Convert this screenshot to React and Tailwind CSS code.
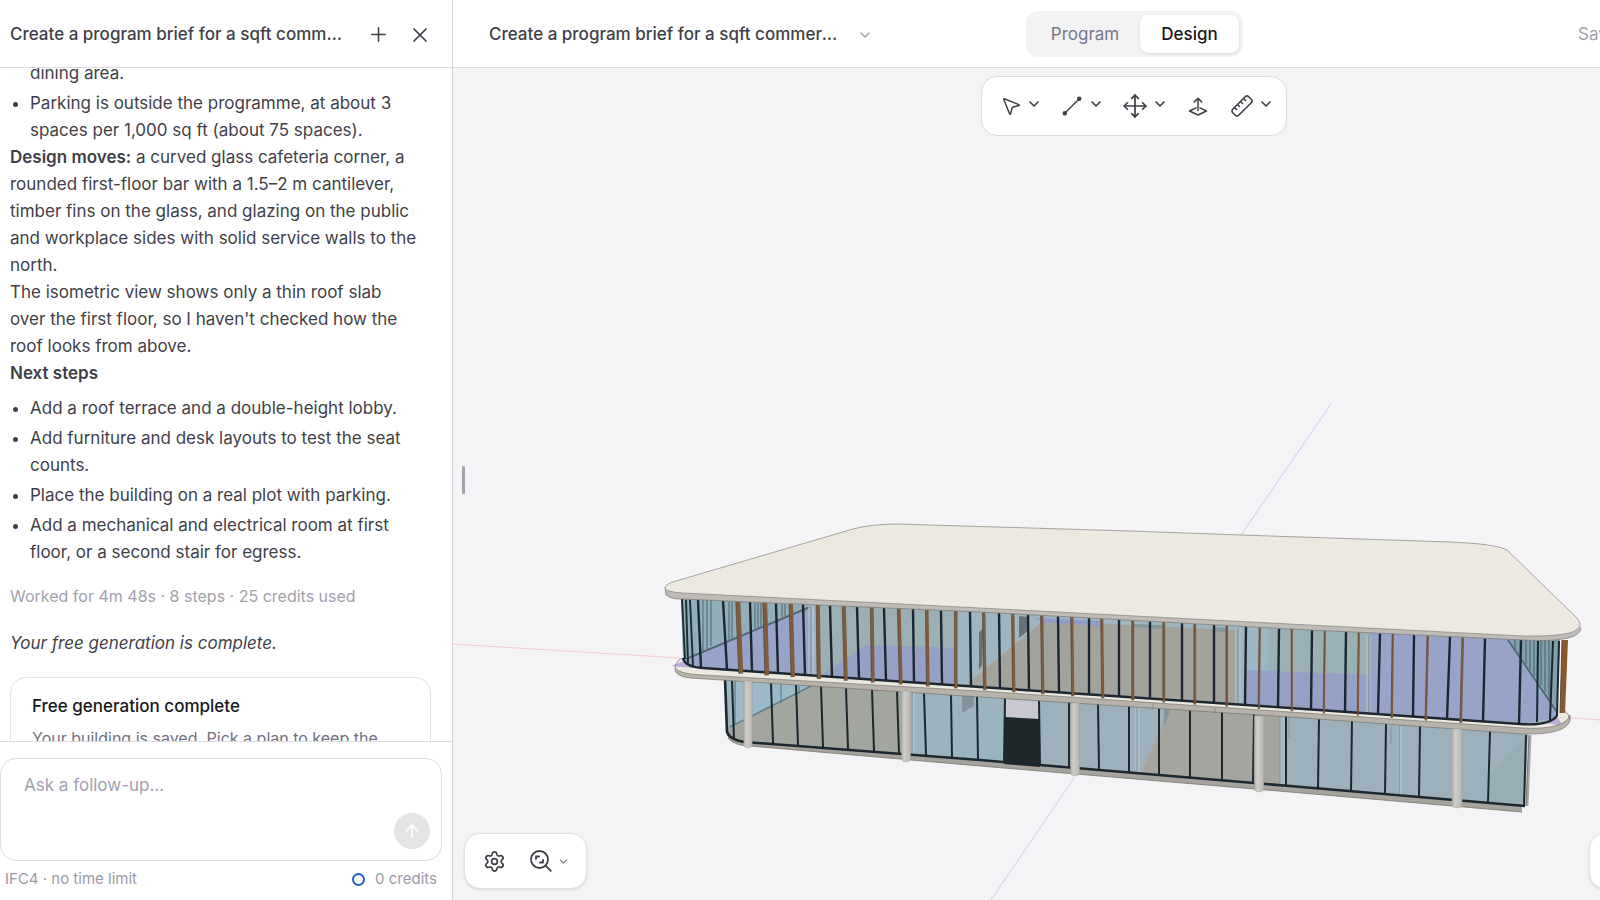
import React from 'react';
import { Plus, X, ChevronDown, ArrowUp, Move, Settings, MousePointer2, Ruler } from 'lucide-react';

/* ---------- building model ---------- */

const edgeY = (points, x) => {
  for (let i = 1; i < points.length; i++) {
    const [x0, y0] = points[i - 1];
    const [x1, y1] = points[i];
    if (x <= x1 || i === points.length - 1) return y0 + ((x - x0) * (y1 - y0)) / (x1 - x0);
  }
  return 0;
};

const ROOF_SOFFIT = [[680, 599], [980, 612], [1290, 629], [1523, 640], [1565, 640]];
const UPPER_SILL = [[703, 668], [980, 687], [1290, 708], [1520, 724]];
const SLAB_SOFFIT = [[690, 678], [980, 696], [1290, 716], [1523, 734]];
const GROUND_SILL = [[737, 740], [980, 760], [1290, 786], [1525, 806]];

const UPPER_MULLIONS = [
  [698, 701], [723, 727], [750, 752], [776, 778], [803, 805], [830, 832], [857, 859], [884, 886],
  [913, 914], [941, 942], [970, 971], [999, 1000], [1028, 1029], [1058, 1059], [1089, 1089],
  [1119, 1119], [1150, 1150], [1182, 1182], [1214, 1214], [1246, 1245], [1279, 1278], [1312, 1311],
  [1346, 1345], [1380, 1378], [1414, 1413], [1450, 1447], [1485, 1483], [1521, 1519],
];

const TIMBER_FINS = [
  [738, 741, 4.6], [765, 767, 4.4], [791, 793, 4], [818, 819, 3.8], [844, 846, 3.6], [872, 873, 3.4],
  [899, 901, 3.3], [927, 928, 3.2], [956, 956, 3], [984, 985, 3], [1013, 1014, 2.9], [1042, 1043, 2.8],
  [1072, 1073, 2.7], [1102, 1103, 2.6], [1133, 1133, 2.5], [1164, 1164, 2.4], [1195, 1195, 2.3],
  [1227, 1227, 2.1], [1260, 1259, 1.9], [1292, 1292, 1.7], [1325, 1324, 1.7], [1359, 1358, 1.7],
  [1393, 1392, 1.9], [1428, 1426, 2], [1463, 1461, 2.2],
];

const GROUND_MULLIONS = [
  [732, 734], [771, 773], [796, 798], [821, 823], [846, 848], [872, 874], [897, 899], [924, 926],
  [951, 952], [977, 978], [1005, 1004], [1039, 1040], [1069, 1069], [1098, 1099], [1129, 1129],
  [1159, 1159], [1190, 1190], [1222, 1222], [1254, 1253], [1286, 1286], [1319, 1318], [1352, 1351],
  [1386, 1385], [1420, 1419], [1490, 1488],
];

const COLUMNS = [
  [748, 8.5, 681, 748], [906, 9, 691, 762], [1075, 9, 703, 776], [1259, 9.5, 716, 792], [1457, 10, 729, 808],
];

function Fin({ from, to, top, bottom, color, width, drop = 0 }) {
  return <line x1={from} y1={edgeY(top, from)} x2={to} y2={edgeY(bottom, to) + drop} stroke={color} strokeWidth={width} />;
}

function BuildingModel() {
  return (
    <svg
      className="absolute inset-0 size-full"
      viewBox="453 68 1147 832"
      preserveAspectRatio="xMidYMid slice"
      role="img"
      aria-label="3D building model"
    >
      <defs>
        <linearGradient id="column" x1="0" x2="1" y1="0" y2="0">
          <stop offset="0" stopColor="#b4b2ae" />
          <stop offset="0.35" stopColor="#cfcdc8" />
          <stop offset="1" stopColor="#b8b6b2" />
        </linearGradient>
        <clipPath id="upper-glass">
          <path d="M681 598 L980 611 L1290 628 L1523 639 L1560 639 L1557 716 Q1545 727 1520 724 L1290 708 L980 687 L703 668 Q684 667 683 660 Z" />
        </clipPath>
        <clipPath id="ground-glass">
          <path d="M725 679 L980 695 L1290 715 L1528 734 L1525 806 L1290 786 L980 760 L745 742 Q728 741 727 732 Z" />
        </clipPath>
      </defs>

      {/* world axes */}
      <path d="M453 644 L680 658 M1565 717 L1600 720" stroke="#f6c9cd" strokeWidth="1" fill="none" />
      <path d="M1331 404 L1241 535 M1074 778 L991 900" stroke="#c3d0f5" strokeWidth="1" fill="none" />

      {/* plinth */}
      <path d="M727 733 L728 738 Q735 746 750 746 L980 766 L1290 792 L1522 812 L1522 805 L1290 784 L980 758 L740 738 Z" fill="#a6a39e" />
      <path d="M728 738 Q735 746 750 746 L980 766 L1290 792 L1522 812" fill="none" stroke="#77756f" strokeWidth="0.8" />

      {/* ground floor interior */}
      <g clipPath="url(#ground-glass)">
        <rect x="720" y="670" width="820" height="150" fill="#9cb1bc" />
        <path d="M725 679 L815 684 L730 727 Z" fill="#9bb9c6" />
        <path d="M727 729 L815 684 L911 690 L911 760 L727 750 Z" fill="#a3a59f" />
        <path d="M730 727 L815 684" stroke="#5f7d8a" strokeWidth="1.6" />
        <path d="M781 684 V703 M799 686 V694 M735 681 V724" stroke="#527280" strokeWidth="1" />
        <path d="M911 689 H1005 V770 H911 Z" fill="#9cb4c0" />
        <path d="M1140 775 L1171 705 L1280 713 V790 Z" fill="#a4a59f" />
        <path d="M1140 775 L1164 727" stroke="#b4aaa0" strokeWidth="1" />
        <path d="M962 695 L974 696 L974 706 L962 713 Z M1164 709 L1170 710 L1164 727 Z" fill="#84939d" />
        <path d="M911 690 V760 M914 690 V760 M1136 707 V774 M1139 707 V774 M1281 716 V788 M1284 716 V788 M1398 726 V798 M1401 726 V798" stroke="#b4c4cd" strokeWidth="1.2" />
        <path d="M912 690 V760 M1137 707 V774 M1280 716 V788 M1399 726 V798" stroke="#6f808a" strokeWidth="0.6" />
        <path d="M1289 717 V738 M1391 726 V744" stroke="#8296a3" strokeWidth="1" />
        <path d="M1490 775 L1525 735 V806 H1490 Z" fill="#93a8b0" fillOpacity="0.35" />
      </g>

      {/* entrance */}
      <path d="M1006 699 L1038 701 L1038 719 L1006 717 Z" fill="#c9c7cf" />
      <path d="M1004 717 L1039 719 L1040 767 L1004 764 Z" fill="#20272a" />

      {GROUND_MULLIONS.map(([from, to]) => (
        <Fin key={from} from={from} to={to} top={SLAB_SOFFIT} bottom={GROUND_SILL} color="#1d272e" width={2} />
      ))}
      <path d="M725 679 L727 732 Q730 740 745 742 L980 760 L1290 786 L1525 806" fill="none" stroke="#1d272e" strokeWidth="2.6" />
      <path d="M1530 735 L1527 806" stroke="#aaa8a4" strokeWidth="3" />
      <path d="M1526 735 L1524 806" stroke="#1d272e" strokeWidth="2" />
      <path d="M1529 735 L1526 806" stroke="#686f70" strokeWidth="0.8" />

      {/* first floor slab */}
      <path d="M682 658 Q673 665 675 670 Q681 675 703 675 L980 691 L1290 713 L1523 729 Q1567 729 1569 717 L1564 710 L1520 722 L980 686 L700 667 Z" fill="#ebe8df" />
      <path d="M671 666 L684 661 L694 668 Z" fill="#b9aedd" />
      <path d="M1545 723 L1558 718 L1563 726 Z" fill="#b9aedd" />
      <path d="M675 668 Q679 674 703 675 L980 691 L1290 712 L1523 728 Q1565 730 1570 715 L1570 721 Q1565 735 1523 734 L1290 717 L980 697 L690 678 Q674 676 675 668 Z" fill="#b8b3aa" />
      <path d="M675 668 Q679 674 703 675 L980 691 L1290 712 L1523 728 Q1565 730 1570 715 L1570 721 Q1565 735 1523 734 L1290 717 L980 697 L690 678 Q674 676 675 668 M1153 703 V709 M1215 708 V713" fill="none" stroke="#6b6963" strokeWidth="0.6" />
      <path d="M682 658 Q676 661 675 668 M1565 711 Q1569 714 1570 720" fill="none" stroke="#706e68" strokeWidth="0.7" />

      {/* first floor interior */}
      <g clipPath="url(#upper-glass)">
        <rect x="675" y="590" width="890" height="145" fill="#9eb6c2" />
        <path d="M681 598 L810 606 L683 662 Z" fill="#92afb9" />
        <path d="M683 662 L810 606 L812 680 L700 670 Z" fill="#97a3c8" />
        <path d="M686 659 L810 607" stroke="#4f6875" strokeWidth="2" />
        <path d="M703 600 V651 M707 600 V649 M711 600 V646 M729 602 V641 M732 602 V640 M755 603 V629 M758 603 V628 M761 603 V627 M782 604 V617 M785 604 V616" stroke="#54717f" strokeWidth="1.2" />
        <path d="M816 605 H956 V690 H816 Z" fill="#9bb0b4" />
        <path d="M820 676 L866 645 L958 648 L958 690 L820 680 Z" fill="#95a0c5" />
        <path d="M960 690 L1043 621 L1238 630 L1238 708 Z" fill="#a3a39d" />
        <path d="M960 690 L1043 621" stroke="#b2a99c" strokeWidth="1" />
        <path d="M1033 618 L1102 621 L1102 626 L1042 622 Z" fill="#919bc8" />
        <path d="M1133 624 L1162 625 L1162 629 L1133 627 Z M1214 627 L1228 628 L1228 633 L1214 631 Z" fill="#83989b" />
        <path d="M1240 625 H1369 V715 H1240 Z" fill="#9bb0b5" />
        <path d="M1240 625 L1268 627 V703 H1240 Z" fill="#9db6c4" />
        <path d="M1246 670 L1369 675 L1369 715 L1246 708 Z" fill="#95a0c5" />
        <path d="M1369 632 L1511 638 L1560 716 L1520 725 L1369 715 Z" fill="#97a4c8" />
        <path d="M1508 638 L1562 638 L1559 712 Z" fill="#82a0a9" />
        <path d="M1508 640 L1557 712" stroke="#4a626b" strokeWidth="1.6" />
        <path d="M1515 640 V650 M1526 640 V664 M1530 640 V670 M1534 640 V676 M1541 640 V685 M1545 640 V692 M1549 640 V699" stroke="#48616b" strokeWidth="1" />
        <path d="M979 632 L983 629 L982 665 L979 670 Z M1019 616 L1028 617 V631 L1019 638 Z" fill="#65727b" />
        <path d="M809 606 V676 M813 606 V676 M1236 628 V703 M1240 628 V703 M1367 635 V712 M1370 635 V712" stroke="#b4c4cd" strokeWidth="1.2" />
        <path d="M811 606 V676 M1238 628 V703 M1369 635 V712" stroke="#6f808a" strokeWidth="0.6" />
      </g>
      <path d="M682 599 L685 659 M686 600 L688 663 M690 600 L693 666" stroke="#1d2b34" strokeWidth="1.9" />
      <path d="M1538 641 L1537 722 M1553 641 L1550 720 M1559 641 L1557 716" stroke="#192731" strokeWidth="2" />
      <path d="M683 658 Q685 667 703 668 L980 687 L1290 708 L1520 724 Q1549 726 1557 716" fill="none" stroke="#1d2730" strokeWidth="2.4" />
      {UPPER_MULLIONS.map(([from, to]) => (
        <Fin key={from} from={from} to={to} top={ROOF_SOFFIT} bottom={UPPER_SILL} color="#1b2630" width={2.4} />
      ))}
      {TIMBER_FINS.map(([from, to, width]) => (
        <React.Fragment key={from}>
          <Fin from={from} to={to} top={ROOF_SOFFIT} bottom={UPPER_SILL} color="#7f5c3c" width={width} drop={3} />
          <Fin from={from - width / 2} to={to - width / 2} top={ROOF_SOFFIT} bottom={UPPER_SILL} color="#4d3c2f" width={0.6} drop={3} />
        </React.Fragment>
      ))}
      <path d="M1562 640 L1568 640 L1565 713 L1560 713 Z" fill="#88592a" />
      <path d="M1562 640 L1560 713" stroke="#4b382a" strokeWidth="0.8" />

      {/* columns */}
      {COLUMNS.map(([x, width, top, bottom]) => (
        <path
          key={x}
          d={`M${x - width / 2} ${top} H${x + width / 2} V${bottom - 2} Q${x} ${bottom + 2} ${x - width / 2} ${bottom - 2} Z`}
          fill="url(#column)"
          stroke="#9a9893"
          strokeWidth="0.4"
        />
      ))}

      {/* roof */}
      <path d="M665 587 L666 595 Q671 599 681 599 L980 612 L1290 629 L1523 640 Q1580 643 1581 628 L1575 618 L665 587 Z" fill="#bfbcb7" />
      <path d="M665 587 L666 595 Q671 599 681 599 L980 612 L1290 629 L1523 640 Q1580 643 1581 628" fill="none" stroke="#7b7973" strokeWidth="0.7" />
      <path
        d="M665 588 Q665 584 676 581 L853 529 Q872 524 897 524 L1130 531 L1270 536 L1450 542 Q1497 544 1507 550 L1577 618 Q1591 635 1540 636 L1523 636 L1270 623 L980 608 L683 593 Q666 592 665 588 Z"
        fill="#ebe9e0"
        stroke="#85847d"
        strokeWidth="0.7"
      />
    </svg>
  );
}

/* ---------- icons ---------- */

function LineIcon() {
  return (
    <svg className="size-6" viewBox="0 0 24 24" fill="none" stroke="currentColor" strokeWidth="1.5" aria-hidden="true">
      <path d="M5 19 19 5" />
      <circle cx="4.800" cy="19.200" r="1.500" fill="currentColor" />
      <circle cx="19.200" cy="4.800" r="1.500" fill="currentColor" />
    </svg>
  );
}

function PushPullIcon() {
  return (
    <svg className="size-6" viewBox="0 0 24 24" fill="none" stroke="currentColor" strokeWidth="1.5" strokeLinecap="round" strokeLinejoin="round" aria-hidden="true">
      <path d="M12 16.500V4.200M8.300 7.900 12 4.200l3.700 3.700" />
      <path d="M10 13.900 3.500 17l8.500 4 8.500-4-6.500-3.100" />
    </svg>
  );
}

function ZoomFitIcon() {
  return (
    <svg className="size-6" viewBox="0 0 24 24" fill="none" stroke="currentColor" strokeWidth="1.8" strokeLinecap="round" strokeLinejoin="round" aria-hidden="true">
      <circle cx="10.500" cy="10.500" r="8.500" />
      <path d="m16.800 16.800 5 5M7 10V7.500h3M14 11v2.500h-3" />
    </svg>
  );
}

/* ---------- chat panel ---------- */

function ChatPanel() {
  return (
    <aside className="flex w-[453px] shrink-0 flex-col border-r border-[#d4d4d8] bg-white">
      <header className="flex h-[68px] shrink-0 items-center border-b border-[#dcdce0] pl-2.5 pr-4 pt-0.5">
        <h2 className="min-w-0 flex-1 truncate text-[17px] font-medium">Create a program brief for a sqft commercial office</h2>
        <button type="button" aria-label="New chat" className="ml-5 flex size-8 items-center justify-center">
          <Plus size={23} strokeWidth={1.6} />
        </button>
        <button type="button" aria-label="Close" className="ml-2.5 flex size-8 items-center justify-center">
          <X size={24} strokeWidth={1.7} />
        </button>
      </header>

      <div className="min-h-0 flex-1 overflow-hidden pl-2.5 pr-[21px]">
        <div className="-mt-2 pr-3 text-[17px] leading-[27px]">
          <ul className="list-disc space-y-[3px] pl-5">
            <li className="list-none">dining area.</li>
            <li>Parking is outside the programme, at about 3 spaces per 1,000 sq ft (about 75 spaces).</li>
          </ul>
          <p>
            <strong className="font-semibold">Design moves:</strong> a curved glass cafeteria corner, a rounded first-floor bar with a 1.5–2 m
            cantilever, timber fins on the glass, and glazing on the public and workplace sides with solid service walls to the north.
          </p>
          <p>The isometric view shows only a thin roof slab over the first floor, so I haven't checked how the roof looks from above.</p>
          <h3 className="font-semibold">Next steps</h3>
          <ul className="mt-2 list-disc space-y-[3px] pl-5">
            <li>Add a roof terrace and a double-height lobby.</li>
            <li>Add furniture and desk layouts to test the seat counts.</li>
            <li>Place the building on a real plot with parking.</li>
            <li>Add a mechanical and electrical room at first floor, or a second stair for egress.</li>
          </ul>
        </div>
        <p className="mt-[18px] text-[16px] leading-6 text-[#a1a1ad]">Worked for 4m 48s · 8 steps · 25 credits used</p>
        <p className="mt-[22px] text-[17px] italic leading-[27px]">Your free generation is complete.</p>
        <section className="mt-5 rounded-2xl border border-[#e2e2e6] px-[21px] py-4">
          <h3 className="text-[17px] font-medium leading-6 text-[#18181b]">Free generation complete</h3>
          <p className="mt-2 text-[16px] leading-6 text-[#71717f]">Your building is saved. Pick a plan to keep the conversation going.</p>
        </section>
      </div>

      <form className="shrink-0 border-t border-[#dcdce0] pr-2.5 pt-4" onSubmit={(event) => event.preventDefault()}>
        <div className="flex h-[103px] rounded-2xl border border-[#dfdfe3] py-[11px] pl-[23px] pr-[11px]">
          <textarea
            aria-label="Ask a follow-up"
            placeholder="Ask a follow-up..."
            className="min-w-0 flex-1 resize-none bg-transparent pt-[3px] text-[17px] leading-6 outline-none placeholder:text-[#a1a1ad]"
          />
          <button type="submit" aria-label="Send" className="flex size-9 items-center justify-center self-end rounded-full bg-[#e4e4e7] text-white">
            <ArrowUp size={20} strokeWidth={2} />
          </button>
        </div>
        <div className="mb-0.5 flex h-[37px] items-center justify-between px-[5px] text-[15px] text-[#9a9aa6]">
          <span>IFC4 · no time limit</span>
          <span className="flex items-center gap-2.5">
            <span className="size-[13px] rounded-full border-2 border-[#1d5fd0]" />0 credits
          </span>
        </div>
      </form>
    </aside>
  );
}

/* ---------- design workspace ---------- */

function ToolButton({ label, children, menu = true }) {
  return (
    <button type="button" aria-label={label} className="flex items-center gap-1">
      {children}
      {menu && <ChevronDown className="-mt-1" size={16} strokeWidth={2.5} />}
    </button>
  );
}

export default function App() {
  return (
    <div className="flex h-screen overflow-hidden bg-white font-['Inter',sans-serif] text-[#3f3f4a]">
      <ChatPanel />
      <main className="flex min-w-0 flex-1 flex-col">
        <header className="flex h-[68px] shrink-0 items-center overflow-hidden border-b border-[#dcdce0] pl-9">
          <button type="button" className="flex w-[384px] shrink-0 items-center gap-3.5 pt-0.5 text-left">
            <span className="min-w-0 truncate text-[17px] font-medium">Create a program brief for a sqft commercial office</span>
            <ChevronDown className="shrink-0 text-[#a1a1ad]" size={16} strokeWidth={2.2} />
          </button>
          <div className="ml-[153px] flex shrink-0 rounded-xl bg-[#f3f3f5] p-1 text-[17px]">
            <button type="button" className="h-[38px] w-[110px] rounded-lg pt-0.5 text-[#77778a]">Program</button>
            <button type="button" className="h-[38px] w-[99px] rounded-lg bg-white pt-0.5 font-medium text-[#18181b] shadow-sm">Design</button>
          </div>
          <span className="ml-auto w-[22px] shrink-0 whitespace-nowrap pt-0.5 text-[17px] text-[#a1a1ad]">Saved</span>
        </header>

        <section className="relative min-h-0 flex-1 overflow-hidden bg-[#f4f4f6]">
          <BuildingModel />

          <div className="absolute left-[9px] top-1/2 h-7 w-[3px] -translate-y-[18px] rounded-full bg-[#a1a1aa]" role="separator" aria-label="Resize panel" />

          <div
            role="toolbar"
            aria-label="Modelling tools"
            className="absolute left-[528px] top-2 flex h-[60px] items-center gap-[18px] rounded-2xl border border-[#dcdce0] bg-white pl-[18px] pr-3"
          >
            <ToolButton label="Select"><MousePointer2 size={22} strokeWidth={1.6} /></ToolButton>
            <ToolButton label="Line"><LineIcon /></ToolButton>
            <ToolButton label="Move"><Move size={26} strokeWidth={1.6} /></ToolButton>
            <ToolButton label="Push or pull" menu={false}><PushPullIcon /></ToolButton>
            <span className="flex pl-0.5">
              <ToolButton label="Measure"><Ruler className="-scale-x-100" size={24} strokeWidth={1.6} /></ToolButton>
            </span>
          </div>

          <div className="absolute bottom-[11px] left-[11px] flex h-[56px] items-center gap-[23px] rounded-2xl border border-[#e2e2e6] bg-white pl-[18px] pr-4 shadow-sm">
            <button type="button" aria-label="Settings"><Settings size={23} strokeWidth={1.8} /></button>
            <button type="button" aria-label="Zoom to fit" className="flex items-center gap-1">
              <ZoomFitIcon />
              <ChevronDown className="text-[#71717f]" size={13} strokeWidth={2} />
            </button>
          </div>

          <div className="absolute -right-11 bottom-[11px] h-[56px] w-[55px] rounded-2xl border border-[#e2e2e6] bg-white shadow-sm" />
        </section>
      </main>
    </div>
  );
}
